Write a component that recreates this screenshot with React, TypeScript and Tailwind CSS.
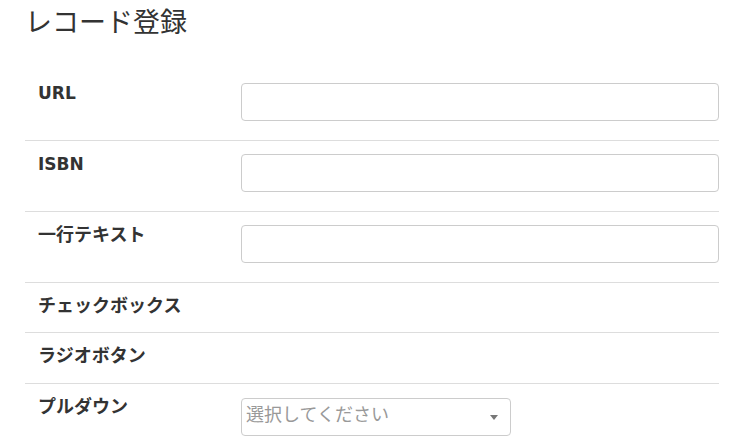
import React from 'react'

const font = { fontFamily: '"DejaVu Sans", "Noto Sans CJK JP", sans-serif' }

type Row = { label: string; kind: 'input' | 'none' | 'select' }

const rows: Row[] = [
  { label: 'URL', kind: 'input' },
  { label: 'ISBN', kind: 'input' },
  { label: '一行テキスト', kind: 'input' },
  { label: 'チェックボックス', kind: 'none' },
  { label: 'ラジオボタン', kind: 'none' },
  { label: 'プルダウン', kind: 'select' },
]

function Field({ row }: { row: Row }) {
  if (row.kind === 'input') {
    return (
      <div className="flex-1 pt-[13px] pb-[19px]">
        <input
          type="text"
          className="block w-full h-[38px] rounded-[4px] border border-[#cccccc] bg-white px-3 outline-none"
        />
      </div>
    )
  }
  if (row.kind === 'select') {
    return (
      <div className="flex-1 pt-[14px] pb-[6px]">
        <div className="flex h-[38px] w-[270px] items-center justify-between rounded-[4px] border border-[#cccccc] bg-white pl-[4px] pr-[12px]">
          <span className="text-[18px] leading-[24px] text-[#999999] -mt-[5px]">選択してください</span>
          <span className="w-0 h-0 border-l-[4px] border-r-[4px] border-t-[5px] border-l-transparent border-r-transparent border-t-[#777777] mt-[1px]" />
        </div>
      </div>
    )
  }
  return <div className="flex-1" />
}

export default function App() {
  return (
    <div className="min-h-screen bg-white text-[#333333]" style={font}>
      <div className="pl-[25px] pr-[26px]">
        <h1 className="h-[69px] pt-[8px] text-[27px] leading-[30px] font-normal">レコード登録</h1>
        <div>
          {rows.map((row, i) => (
            <div
              key={row.label}
              className={`flex border-t ${i === 0 ? 'border-transparent' : 'border-[#dddddd]'} ${
                row.kind === 'none' ? (i === 3 ? 'h-[50px]' : 'h-[51px]') : ''
              }`}
            >
              <div
                className={`w-[216px] shrink-0 pl-[13px] pt-[11px] leading-[24px] font-bold ${
                  /^[\x00-\x7f]+$/.test(row.label) ? 'text-[17px]' : 'text-[18px]'
                }`}
              >
                {row.label}
              </div>
              <Field row={row} />
            </div>
          ))}
        </div>
      </div>
    </div>
  )
}
